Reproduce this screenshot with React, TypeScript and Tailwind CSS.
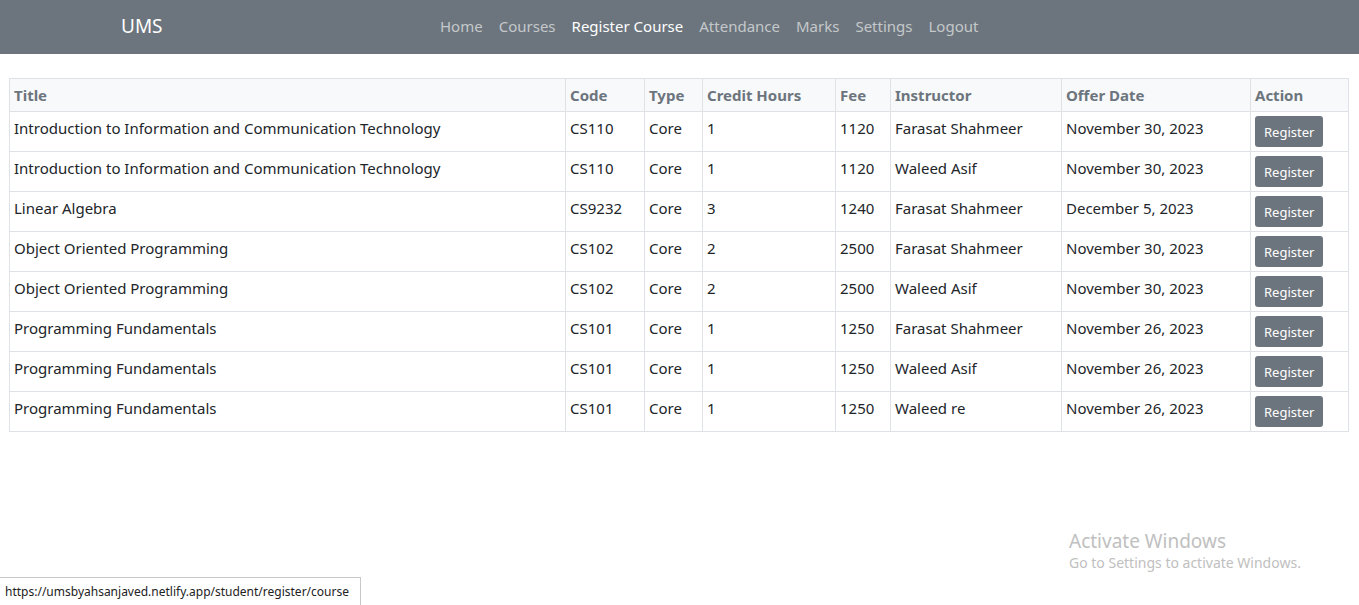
import React from "react";

const rows = [
  ["Introduction to Information and Communication Technology", "CS110", "Core", "1", "1120", "Farasat Shahmeer", "November 30, 2023"],
  ["Introduction to Information and Communication Technology", "CS110", "Core", "1", "1120", "Waleed Asif", "November 30, 2023"],
  ["Linear Algebra", "CS9232", "Core", "3", "1240", "Farasat Shahmeer", "December 5, 2023"],
  ["Object Oriented Programming", "CS102", "Core", "2", "2500", "Farasat Shahmeer", "November 30, 2023"],
  ["Object Oriented Programming", "CS102", "Core", "2", "2500", "Waleed Asif", "November 30, 2023"],
  ["Programming Fundamentals", "CS101", "Core", "1", "1250", "Farasat Shahmeer", "November 26, 2023"],
  ["Programming Fundamentals", "CS101", "Core", "1", "1250", "Waleed Asif", "November 26, 2023"],
  ["Programming Fundamentals", "CS101", "Core", "1", "1250", "Waleed re", "November 26, 2023"],
];

const headers = ["Title", "Code", "Type", "Credit Hours", "Fee", "Instructor", "Offer Date", "Action"];
const widths = [556, 79, 58, 133, 55, 171, 189, 98];

export default function App() {
  return (
    <div className="relative min-h-[605px] bg-white text-[#212529]" style={{ fontFamily: '"Noto Sans", "Open Sans", sans-serif' }}>
      <nav className="flex h-[54px] items-center bg-[#6c757d] pb-[2px]">
        <div className="ml-[121px] w-[319px] text-[19px] text-white">UMS</div>
        <div className="flex gap-4 text-[15px] text-[#c4c8cb]">
          <span>Home</span>
          <span>Courses</span>
          <span className="text-white">Register Course</span>
          <span>Attendance</span>
          <span>Marks</span>
          <span>Settings</span>
          <span>Logout</span>
        </div>
      </nav>
      <div className="ml-[9px] mt-[24px] w-[1340px]">
        <table className="w-full table-fixed border-collapse text-[15px] leading-6">
          <colgroup>
            {widths.map((w, i) => (
              <col key={i} style={{ width: w }} />
            ))}
          </colgroup>
          <thead>
            <tr className="bg-[#f8f9fa]">
              {headers.map((h) => (
                <th key={h} className="border border-[#dee2e6] p-1 text-left font-bold text-[#6c757d]">
                  {h}
                </th>
              ))}
            </tr>
          </thead>
          <tbody>
            {rows.map((r, i) => (
              <tr key={i}>
                {r.map((c, j) => (
                  <td key={j} className="whitespace-nowrap border border-[#dee2e6] p-1 align-top">
                    {c}
                  </td>
                ))}
                <td className="border border-[#dee2e6] p-1 align-top">
                  <button className="h-[31px] rounded-[3px] bg-[#6c757d] px-[9px] text-[13px] text-white">Register</button>
                </td>
              </tr>
            ))}
          </tbody>
        </table>
      </div>
      <div className="absolute left-[1069px] top-[529px] text-[#c0c0c0]">
        <div className="text-[19px] leading-6">Activate Windows</div>
        <div className="text-[14px] leading-5">Go to Settings to activate Windows.</div>
      </div>
      <div className="absolute bottom-0 left-0 h-[28px] border border-l-0 border-b-0 border-[#c8c8c8] bg-white pl-[5px] pr-[11px] pt-[6px] text-[12px] leading-4 text-[#222]">
        https://umsbyahsanjaved.netlify.app/student/register/course
      </div>
    </div>
  );
}
